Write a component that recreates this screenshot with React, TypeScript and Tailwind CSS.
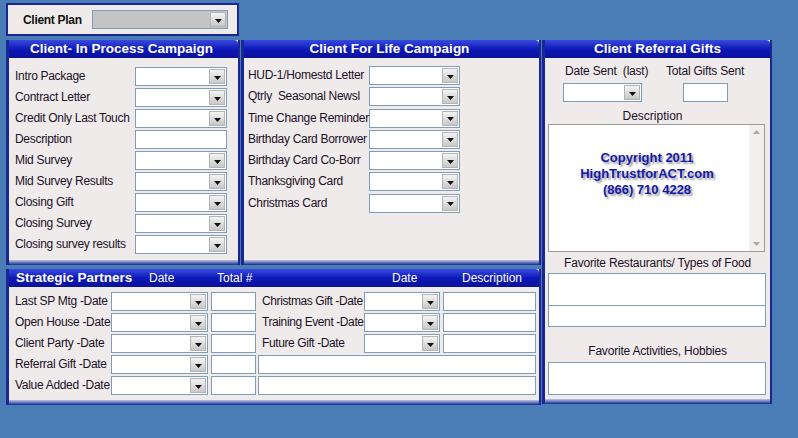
import React from 'react';

const label = 'text-[12px] leading-[19px] tracking-[-0.3px] text-[#1c1028] whitespace-nowrap';

function Arrow() {
  return (
    <svg width="7" height="4" viewBox="0 0 7 4" className="mt-[2px]">
      <path d="M0 0 H7 L3.5 4 Z" fill="#111" />
    </svg>
  );
}

function Combo({ className = '', gray = false }: { className?: string; gray?: boolean }) {
  return (
    <div className={`flex h-[19px] shrink-0 border border-[#7f9db9] ${gray ? 'bg-[#c4c4c4]' : 'bg-white'} ${className}`}>
      <div className="flex-1" />
      <div className="m-[1px] flex w-[16px] items-center justify-center border border-[#b4b4b4] bg-gradient-to-b from-[#f4f4f4] to-[#c8c8c8]">
        <Arrow />
      </div>
    </div>
  );
}

function Box({ className = '' }: { className?: string }) {
  return <div className={`shrink-0 border border-[#7f9db9] bg-white ${className}`} />;
}

function Header({ children, className = '' }: { children: React.ReactNode; className?: string }) {
  return (
    <div
      className={`flex h-[18px] items-center rounded-tr-[4px] bg-gradient-to-b from-[#3a48e0] via-[#0d18b8] to-[#0a1298] text-[13.5px] font-bold text-white ${className}`}
    >
      {children}
    </div>
  );
}

function Panel({ className = '', children }: { className?: string; children: React.ReactNode }) {
  return (
    <div className={`flex flex-col border-l-[3px] border-r-[2px] border-[#1a2692] bg-[#efebea] ${className}`}>
      {children}
      <div className="mt-auto h-[5px] bg-gradient-to-b from-[#c4c6e0] to-[#1a2490]" />
    </div>
  );
}

const campaign1 = [
  ['Intro Package', 'combo'],
  ['Contract Letter', 'combo'],
  ['Credit Only Last Touch', 'combo'],
  ['Description', 'box'],
  ['Mid Survey', 'combo'],
  ['Mid Survey Results', 'combo'],
  ['Closing Gift', 'combo'],
  ['Closing Survey', 'combo'],
  ['Closing survey results', 'combo'],
];

const campaign2 = [
  'HUD-1/Homestd Letter',
  'Qtrly  Seasonal Newsl',
  'Time Change Reminder',
  'Birthday Card Borrower',
  'Birthday Card Co-Borr',
  'Thanksgiving Card',
  'Christmas Card',
];

const partners = ['Last SP Mtg -Date', 'Open House -Date', 'Client Party -Date', 'Referral Gift -Date', 'Value Added -Date'];
const partnersRight = ['Christmas Gift -Date', 'Training Event -Date', 'Future Gift -Date'];

export default function App() {
  return (
    <div className="h-[438px] w-[798px] overflow-hidden bg-[#4a7cb5] font-['Liberation_Sans',Arial,sans-serif]">
      <div className="pl-[6px] pt-[3px]">
        {/* Client plan */}
        <div className="flex h-[33px] w-[233px] items-center border-2 border-[#1a2692] bg-[#efebea] pl-[15px]">
          <span className="w-[69px] text-[12px] font-bold tracking-[-0.3px] text-[#111]">Client Plan</span>
          <Combo gray className="w-[136px]" />
        </div>

        <div className="mt-[4px] flex">
          <div className="w-[535px]">
            <div className="flex h-[225px]">
              {/* Campaign 1 */}
              <Panel className="w-[234px]">
                <Header className="justify-center pr-[4px]">Client- In Process Campaign</Header>
                <div className="flex flex-col gap-[2px] pl-[6px] pt-[9px]">
                  {campaign1.map(([t, kind]) => (
                    <div key={t} className="flex items-center">
                      <span className={`${label} w-[120px]`}>{t}</span>
                      {kind === 'combo' ? <Combo className="w-[92px]" /> : <Box className="h-[19px] w-[92px]" />}
                    </div>
                  ))}
                </div>
              </Panel>

              {/* Campaign 2 */}
              <Panel className="ml-[1px] w-[300px]">
                <Header className="justify-center pr-[4px]">Client For Life Campaign</Header>
                <div className="flex flex-col gap-[2.3px] pl-[4px] pt-[8px]">
                  {campaign2.map((t) => (
                    <div key={t} className="flex items-center">
                      <span className={`${label} w-[121px] whitespace-pre`}>{t}</span>
                      <Combo className="w-[91px]" />
                    </div>
                  ))}
                </div>
              </Panel>
            </div>

            {/* Strategic partners */}
            <Panel className="mt-[4px] h-[136px]">
              <Header className="pl-[7px] font-normal">
                <span className="w-[133px] font-bold">Strategic Partners</span>
                <span className="w-[68px] text-[12px] font-normal">Date</span>
                <span className="w-[175px] text-[12px] font-normal">Total #</span>
                <span className="w-[70px] text-[12px] font-normal">Date</span>
                <span className="text-[12px] font-normal">Description</span>
              </Header>
              <div className="flex flex-col gap-[2px] pl-[6px] pt-[5px]">
                {partners.map((t, i) => (
                  <div key={t} className="flex items-center">
                    <span className={`${label} w-[96px]`}>{t}</span>
                    <Combo className="w-[97px]" />
                    <Box className="ml-[3px] h-[19px] w-[45px]" />
                    {i < 3 ? (
                      <>
                        <span className={`${label} ml-[6px] w-[102px] tracking-[-0.4px]`}>{partnersRight[i]}</span>
                        <Combo className="w-[76px]" />
                        <Box className="ml-[3px] h-[19px] w-[93px]" />
                      </>
                    ) : (
                      <Box className="ml-[2px] h-[19px] w-[278px]" />
                    )}
                  </div>
                ))}
              </div>
            </Panel>
          </div>

          {/* Referral gifts */}
          <Panel className="ml-[1px] h-[364px] w-[230px]">
            <Header className="justify-center">Client Referral Gifts</Header>
            <div className="flex pt-[6px] text-[12px] tracking-[-0.2px] text-[#1c1028]">
              <div className="ml-[18px] flex w-[82px] flex-col">
                <span className="whitespace-pre pl-[2px] leading-[14px]">Date Sent  (last)</span>
                <Combo className="mt-[5px] w-[79px]" />
              </div>
              <div className="ml-[21px] flex flex-col items-center">
                <span className="leading-[14px]">Total Gifts Sent</span>
                <Box className="mt-[5px] h-[19px] w-[45px]" />
              </div>
            </div>
            <div className="mt-[7px] pr-[10px] text-center text-[12px] leading-[14px] text-[#1c1028]">Description</div>
            <div className="ml-[3px] mt-[1px] flex h-[128px] w-[217px] border border-[#9a9a9a] bg-white">
              <div className="flex flex-1 flex-col items-center pr-[4px] pt-[25px] text-[13px] font-bold leading-[16px] text-[#1418a8] [text-shadow:2px_2px_2px_#999]">
                <span>Copyright 2011</span>
                <span>HighTrustforACT.com</span>
                <span>(866) 710 4228</span>
              </div>
              <div className="flex w-[15px] flex-col items-center justify-between bg-[#f2f0ee] py-[5px]">
                <svg width="7" height="4" viewBox="0 0 7 4"><path d="M0 4 L3.5 0 L7 4 Z" fill="#a8a8a8" /></svg>
                <svg width="7" height="4" viewBox="0 0 7 4"><path d="M0 0 H7 L3.5 4 Z" fill="#a8a8a8" /></svg>
              </div>
            </div>
            <div className="mt-[4px] text-center text-[12px] leading-[14px] tracking-[-0.2px] text-[#1c1028]">Favorite Restaurants/ Types of Food</div>
            <Box className="ml-[3px] mt-[3px] h-[33px] w-[218px]" />
            <Box className="ml-[3px] h-[21px] w-[218px] border-t-0" />
            <div className="mt-[17px] text-center text-[12px] leading-[14px] tracking-[-0.2px] text-[#1c1028]">Favorite Activities, Hobbies</div>
            <Box className="ml-[3px] mt-[4px] h-[33px] w-[218px]" />
          </Panel>
        </div>
      </div>
    </div>
  );
}
